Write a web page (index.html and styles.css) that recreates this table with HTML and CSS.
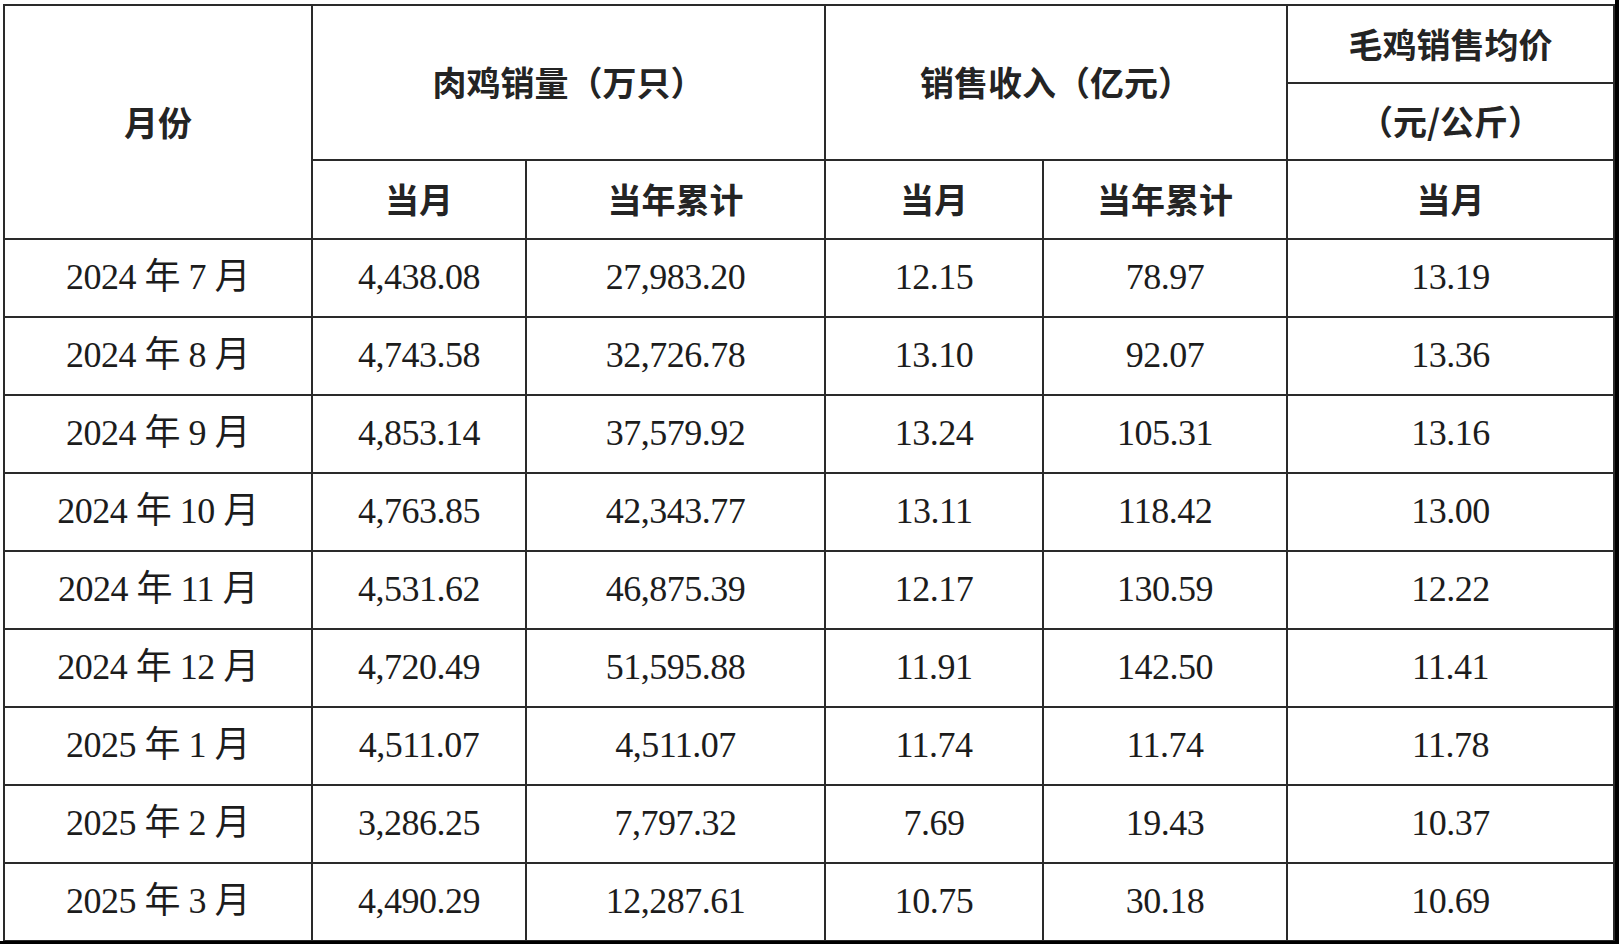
FILE: index.html
```html
<!DOCTYPE html>
<html lang="zh-CN">
<head>
<meta charset="utf-8">
<title>肉鸡销售情况</title>
<link rel="stylesheet" href="styles.css">
</head>
<body>
<div class="sheet">
<table class="sales">
  <colgroup>
    <col class="c1"><col class="c2"><col class="c3"><col class="c4"><col class="c5"><col class="c6">
  </colgroup>
  <thead>
    <tr class="ha">
      <th rowspan="3">月份</th>
      <th rowspan="2" colspan="2">肉鸡销量（万只）</th>
      <th rowspan="2" colspan="2">销售收入（亿元）</th>
      <th>毛鸡销售均价</th>
    </tr>
    <tr class="hb">
      <th>（元/公斤）</th>
    </tr>
    <tr class="hc">
      <th>当月</th><th>当年累计</th><th>当月</th><th>当年累计</th><th>当月</th>
    </tr>
  </thead>
  <tbody>
    <tr><td>2024 年 7 月</td><td>4,438.08</td><td>27,983.20</td><td>12.15</td><td>78.97</td><td>13.19</td></tr>
    <tr><td>2024 年 8 月</td><td>4,743.58</td><td>32,726.78</td><td>13.10</td><td>92.07</td><td>13.36</td></tr>
    <tr><td>2024 年 9 月</td><td>4,853.14</td><td>37,579.92</td><td>13.24</td><td>105.31</td><td>13.16</td></tr>
    <tr><td>2024 年 10 月</td><td>4,763.85</td><td>42,343.77</td><td>13.11</td><td>118.42</td><td>13.00</td></tr>
    <tr><td>2024 年 11 月</td><td>4,531.62</td><td>46,875.39</td><td>12.17</td><td>130.59</td><td>12.22</td></tr>
    <tr><td>2024 年 12 月</td><td>4,720.49</td><td>51,595.88</td><td>11.91</td><td>142.50</td><td>11.41</td></tr>
    <tr><td>2025 年 1 月</td><td>4,511.07</td><td>4,511.07</td><td>11.74</td><td>11.74</td><td>11.78</td></tr>
    <tr><td>2025 年 2 月</td><td>3,286.25</td><td>7,797.32</td><td>7.69</td><td>19.43</td><td>10.37</td></tr>
    <tr><td>2025 年 3 月</td><td>4,490.29</td><td>12,287.61</td><td>10.75</td><td>30.18</td><td>10.69</td></tr>
  </tbody>
</table>
</div>
</body>
</html>
```

FILE: styles.css
```css
html, body {
  margin: 0;
  padding: 0;
  background: #000;
}

.sheet {
  width: 1615px;
  height: 941px;
  box-sizing: border-box;
  padding: 4px 0 0 3px;
  background: #fff;
}

.sales {
  border-collapse: collapse;
  table-layout: fixed;
  width: 1610px;
  color: #1c1c1c;
}

.c1 { width: 308px; }
.c2 { width: 214px; }
.c3 { width: 299px; }
.c4 { width: 218px; }
.c5 { width: 244px; }
.c6 { width: 327px; }

.sales th,
.sales td {
  border: 2px solid #2a2a2a;
  padding: 0;
  text-align: center;
  vertical-align: middle;
  white-space: nowrap;
}

.sales th {
  font-family: "Noto Sans CJK SC", "Noto Sans", sans-serif;
  font-size: 34px;
  font-weight: 700;
  line-height: 1.2;
  color: #242424;
}

.ha { height: 78px; }
.hb { height: 77px; }
.hc { height: 79px; }

.sales td {
  font-family: "Liberation Serif", "Noto Sans CJK SC", serif;
  font-size: 36px;
  letter-spacing: -0.5px;
  line-height: 1.1;
  height: 76px;
}
```
